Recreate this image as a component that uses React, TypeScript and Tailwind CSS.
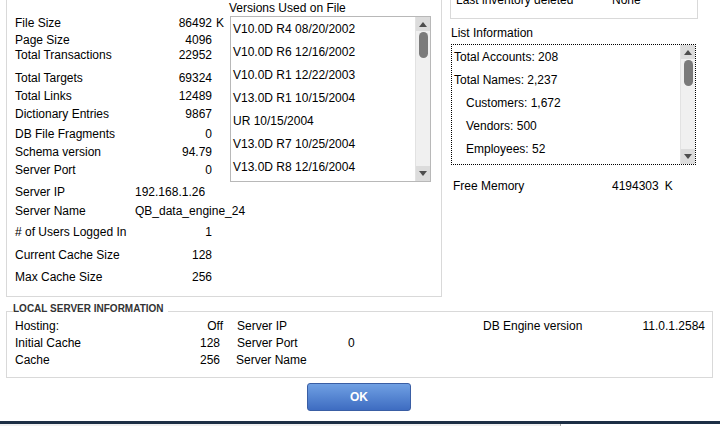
import React from 'react'

type Stat = { label: string; value: string; mt: string; unit?: string; left?: boolean }

const stats: Stat[] = [
  { label: 'File Size', value: '86492', mt: 'mt-[16px]', unit: 'K' },
  { label: 'Page Size', value: '4096', mt: 'mt-[3px]' },
  { label: 'Total Transactions', value: '22952', mt: 'mt-[1px]' },
  { label: 'Total Targets', value: '69324', mt: 'mt-[9px]' },
  { label: 'Total Links', value: '12489', mt: 'mt-[4px]' },
  { label: 'Dictionary Entries', value: '9867', mt: 'mt-[4px]' },
  { label: 'DB File Fragments', value: '0', mt: 'mt-[6px]' },
  { label: 'Schema version', value: '94.79', mt: 'mt-[4px]' },
  { label: 'Server Port', value: '0', mt: 'mt-[4px]' },
  { label: 'Server IP', value: '192.168.1.26', mt: 'mt-[8px]', left: true },
  { label: 'Server Name', value: 'QB_data_engine_24', mt: 'mt-[5px]', left: true },
  { label: '# of Users Logged In', value: '1', mt: 'mt-[7px]' },
  { label: 'Current Cache Size', value: '128', mt: 'mt-[9px]' },
  { label: 'Max Cache Size', value: '256', mt: 'mt-[8px]' },
]

const versions = [
  'V10.0D R4 08/20/2002',
  'V10.0D R6 12/16/2002',
  'V10.0D R1 12/22/2003',
  'V13.0D R1 10/15/2004',
  'UR 10/15/2004',
  'V13.0D R7 10/25/2004',
  'V13.0D R8 12/16/2004',
]

const listInfo = [
  { text: 'Total Accounts: 208', indent: false },
  { text: 'Total Names: 2,237', indent: false },
  { text: 'Customers: 1,672', indent: true },
  { text: 'Vendors: 500', indent: true },
  { text: 'Employees: 52', indent: true },
]

function Arrow({ up }: { up?: boolean }) {
  return (
    <svg width="8" height="5" viewBox="0 0 8 5" className="block">
      <path d={up ? 'M0 5 L4 0 L8 5 Z' : 'M0 0 L4 5 L8 0 Z'} fill="#4d4d4d" />
    </svg>
  )
}

function Scrollbar() {
  return (
    <div className="flex h-full w-[15px] flex-col border-l border-[#e2e2e2] bg-[#f0f0f0]">
      <div className="flex h-[14px] items-center justify-center bg-[#dcdcdc]">
        <Arrow up />
      </div>
      <div className="flex flex-1 justify-center">
        <div className="mt-[1px] h-[26px] w-[9px] rounded-full bg-[#7b7b7b]" />
      </div>
      <div className="flex h-[15px] items-center justify-center bg-[#dcdcdc]">
        <Arrow />
      </div>
    </div>
  )
}

export default function App() {
  return (
    <div className="h-[426px] w-[720px] overflow-hidden bg-white font-['Liberation_Sans',Arial,sans-serif] text-[12px] text-black">
      {/* top area */}
      <div className="flex h-[297px] items-start">
        <div className="ml-[6px] flex h-[297px] w-[436px] border-x border-b border-[#d9d9d9]">
          <div className="flex w-[222px] shrink-0 flex-col pl-[8px]">
            {stats.map((s) => (
              <div key={s.label} className={`flex h-[14px] items-center leading-[14px] whitespace-nowrap ${s.mt}`}>
                {s.left ? (
                  <>
                    <span className="w-[120px] shrink-0">{s.label}</span>
                    <span className="shrink-0">{s.value}</span>
                  </>
                ) : (
                  <>
                    <div className="flex w-[197px] shrink-0 justify-between">
                      <span>{s.label}</span>
                      <span>{s.value}</span>
                    </div>
                    {s.unit && <span className="ml-[4px]">{s.unit}</span>}
                  </>
                )}
              </div>
            ))}
          </div>

          <div className="flex w-[202px] shrink-0 flex-col pt-[1px]">
            <div className="h-[15px] leading-[14px]">Versions Used on File</div>
            <div className="ml-[1px] flex h-[166px] w-[201px] border border-[#b8b8b8]">
              <div className="flex-1 pt-[1px] pl-[2px]">
                {versions.map((v) => (
                  <div key={v} className="h-[23px] leading-[23px] whitespace-nowrap">
                    {v}
                  </div>
                ))}
              </div>
              <Scrollbar />
            </div>
          </div>
        </div>

        <div className="ml-[8px] flex w-[248px] flex-col">
          <div className="h-[19px] overflow-hidden border-x border-b border-[#d9d9d9]">
            <div className="mt-[-7px] flex h-[14px] pl-[5px] leading-[14px] whitespace-nowrap">
              <span className="w-[156px]">Last inventory deleted</span>
              <span>None</span>
            </div>
          </div>

          <div className="mt-[7px] ml-[1px] h-[14px] leading-[14px]">List Information</div>
          <div className="mt-[4px] ml-[1px] flex h-[121px] w-[245px] border border-dotted border-black">
            <div className="flex-1 pt-[1px]">
              {listInfo.map((l) => (
                <div
                  key={l.text}
                  className={`h-[23px] leading-[23px] whitespace-nowrap ${l.indent ? 'pl-[14px]' : 'pl-[2px]'}`}
                >
                  {l.text}
                </div>
              ))}
            </div>
            <Scrollbar />
          </div>

          <div className="mt-[14px] ml-[3px] flex h-[14px] leading-[14px] whitespace-nowrap">
            <span className="w-[159px]">Free Memory</span>
            <span>4194303</span>
            <span className="ml-[6px]">K</span>
          </div>
        </div>
      </div>

      {/* local server information */}
      <div className="mt-[6px] ml-[6px] flex h-[9px] w-[707px]">
        <div className="h-px w-[7px] self-end bg-[#d9d9d9]" />
        <span className="pr-[4px] text-[10px] leading-[12px] font-bold whitespace-nowrap text-[#333333]">
          LOCAL SERVER INFORMATION
        </span>
        <div className="h-px flex-1 self-end bg-[#d9d9d9]" />
      </div>
      <div className="ml-[6px] h-[66px] w-[707px] border-x border-b border-[#d9d9d9] pt-[7px]">
        <div className="flex h-[14px] leading-[14px] whitespace-nowrap">
          <div className="flex w-[217px] justify-between pr-[1px] pl-[8px]">
            <span>Hosting:</span>
            <span>Off</span>
          </div>
          <div className="w-[259px] pl-[13px]">Server IP</div>
          <div className="flex flex-1 justify-between pr-[7px]">
            <span>DB Engine version</span>
            <span>11.0.1.2584</span>
          </div>
        </div>
        <div className="mt-[3px] flex h-[14px] leading-[14px] whitespace-nowrap">
          <div className="flex w-[217px] justify-between pr-[4px] pl-[8px]">
            <span>Initial Cache</span>
            <span>128</span>
          </div>
          <div className="flex pl-[13px]">
            <span className="w-[111px]">Server Port</span>
            <span>0</span>
          </div>
        </div>
        <div className="mt-[3px] flex h-[14px] leading-[14px] whitespace-nowrap">
          <div className="flex w-[217px] justify-between pr-[4px] pl-[8px]">
            <span>Cache</span>
            <span>256</span>
          </div>
          <div className="pl-[12px]">Server Name</div>
        </div>
      </div>

      {/* button */}
      <div className="mt-[5px] flex">
        <button className="ml-[307px] h-[28px] w-[104px] rounded-[3px] border border-[#3a5ea4] bg-linear-to-b from-[#70a0e3] to-[#3e6cc1] text-[12px] font-bold text-white">
          OK
        </button>
      </div>

      {/* window edge */}
      <div className="mt-[10px] h-[3px] bg-[#1d2f45]" />
      <div className="flex h-[2px]">
        <div className="w-[560px] bg-[#f0f0f0]" />
        <div className="w-px bg-[#a8a8a8]" />
        <div className="flex-1 overflow-hidden bg-white pl-[9px]">
          <div className="text-[12px] leading-[14px] whitespace-nowrap text-[#2b3fc4]">10/21/08 11:4 am&nbsp;&nbsp;&nbsp;&nbsp;01</div>
        </div>
      </div>
    </div>
  )
}
